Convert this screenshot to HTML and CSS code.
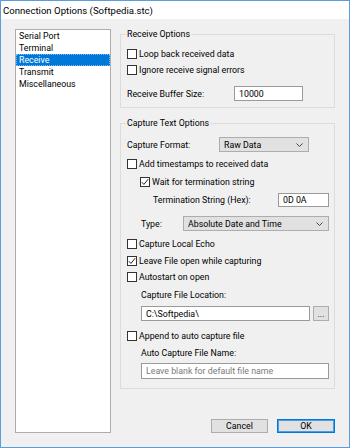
FILE: index.html
```html
<!DOCTYPE html>
<html lang="en">
<head>
    <meta charset="UTF-8">
    <meta name="viewport" content="width=device-width, initial-scale=1.0">
    <title>Connection Options</title>
    <link rel="stylesheet" href="styles.css">
</head>
<body>
    <div class="window">
        <div class="titlebar">Connection Options (Softpedia.stc)</div>
        <div class="body">
            <ul class="nav-list">
                <li>Serial Port</li>
                <li>Terminal</li>
                <li class="selected">Receive</li>
                <li>Transmit</li>
                <li>Miscellaneous</li>
            </ul>
            <div class="pane">
                <fieldset class="group group-receive">
                    <legend>Receive Options</legend>
                    <label class="row check"><span class="box"></span>Loop back received data</label>
                    <label class="row check"><span class="box"></span>Ignore receive signal errors</label>
                    <div class="row r-buffer">
                        <span class="label-buffer">Receive Buffer Size:</span>
                        <input class="field field-buffer" type="text" value="10000">
                    </div>
                </fieldset>

                <fieldset class="group group-capture">
                    <legend>Capture Text Options</legend>
                    <div class="row r-fmt">
                        <span class="label-fmt">Capture Format:</span>
                        <div class="select select-fmt"><span>Raw Data</span>
                            <svg width="7" height="4" viewBox="0 0 7 4"><path d="M0.5 0.5 L3.5 3.5 L6.5 0.5" fill="none" stroke="#444" stroke-width="1"/></svg>
                        </div>
                    </div>
                    <label class="row check r-stamp"><span class="box"></span>Add timestamps to received data</label>
                    <label class="row check r-wait"><span class="box">
                        <svg width="8" height="8" viewBox="0 0 8 8"><path d="M0.8 4.2 L2.9 6.4 L7.2 1.2" fill="none" stroke="#222" stroke-width="1"/></svg>
                    </span>Wait for termination string</label>
                    <div class="row r-term">
                        <span>Termination String (Hex):</span>
                        <input class="field field-term" type="text" value="0D 0A">
                    </div>
                    <div class="row r-type">
                        <span>Type:</span>
                        <div class="select select-type"><span>Absolute Date and Time</span>
                            <svg width="7" height="4" viewBox="0 0 7 4"><path d="M0.5 0.5 L3.5 3.5 L6.5 0.5" fill="none" stroke="#444" stroke-width="1"/></svg>
                        </div>
                    </div>
                    <label class="row check r-echo"><span class="box"></span>Capture Local Echo</label>
                    <label class="row check r-leave"><span class="box">
                        <svg width="8" height="8" viewBox="0 0 8 8"><path d="M0.8 4.2 L2.9 6.4 L7.2 1.2" fill="none" stroke="#222" stroke-width="1"/></svg>
                    </span>Leave File open while capturing</label>
                    <label class="row check"><span class="box"></span>Autostart on open</label>
                    <div class="row r-loclabel">Capture File Location:</div>
                    <div class="row r-loc">
                        <input class="field field-loc" type="text" value="C:\Softpedia\">
                        <button class="btn btn-browse">...</button>
                    </div>
                    <label class="row check r-append"><span class="box"></span>Append to auto capture file</label>
                    <div class="row r-namelabel">Auto Capture File Name:</div>
                    <div class="row r-name">
                        <input class="field field-name" type="text" placeholder="Leave blank for default file name">
                    </div>
                </fieldset>

                <div class="buttons">
                    <button class="btn btn-cancel">Cancel</button>
                    <button class="btn btn-ok">OK</button>
                </div>
            </div>
        </div>
    </div>
</body>
</html>
```

FILE: styles.css
```css
body {
    margin: 0;
    font-family: Roboto, "Liberation Sans", Arial, sans-serif;
    font-size: 8.8px;
    color: #000;
    background: #fff;
}

.window {
    width: 350px;
    height: 448px;
    box-sizing: border-box;
    border: 1px solid #5b9de0;
    display: flex;
    flex-direction: column;
    background: #f0f0f0;
}

.titlebar {
    height: 18px;
    background: #fff;
    padding-left: 2px;
    display: flex;
    align-items: center;
    font-size: 9.6px;
}

.body {
    flex: 1;
    display: flex;
    gap: 9px;
    padding: 9px 14px 14px;
}

.nav-list {
    list-style: none;
    margin: 1px 0 0;
    padding: 0;
    width: 96px;
    box-sizing: border-box;
    border: 1px solid #adadad;
    background: #fff;
}

.nav-list li {
    height: 12px;
    line-height: 12px;
    padding-left: 3px;
}

.nav-list li.selected {
    background: #0078d7;
    color: #fff;
    outline: 1px dotted #7fb8ea;
    outline-offset: -1px;
}

.pane {
    flex: 1;
    display: flex;
    flex-direction: column;
    min-width: 0;
}

.group {
    margin: 0;
    border: 1px solid #dcdcdc;
    padding: 6px 5px 6px 6px;
    min-width: 0;
}

.group legend {
    padding: 0 1px;
    margin-left: -1px;
    line-height: 12px;
}

.group-capture {
    margin-top: 9px;
    padding-top: 0;
    padding-bottom: 9px;
}

.row {
    display: flex;
    align-items: center;
    height: 16px;
}

.box {
    width: 10px;
    height: 10px;
    box-sizing: border-box;
    border: 1px solid #333;
    background: #fff;
    margin-right: 2px;
    display: inline-flex;
    align-items: center;
    justify-content: center;
}

.field {
    box-sizing: border-box;
    height: 100%;
    border: 1px solid #9a9a9a;
    background: #fff;
    font: inherit;
    padding: 0 4px;
    margin: 0;
    outline: none;
}

.field::placeholder {
    color: #7a7a7a;
}

.select {
    box-sizing: border-box;
    height: 100%;
    border: 1px solid #adadad;
    background: #e1e1e1;
    display: flex;
    align-items: center;
    justify-content: space-between;
    padding: 0 5px 0 4px;
}

.btn {
    box-sizing: border-box;
    margin: 0;
    padding: 0;
    border: 1px solid #adadad;
    background: #e1e1e1;
    font: inherit;
    color: #000;
}

/* receive group */
.r-buffer {
    margin-top: 8px;
    height: 15px;
}

.label-buffer {
    width: 107px;
}

.field-buffer {
    width: 69px;
}

/* capture group */
.r-fmt {
    margin-top: 8px;
    height: 15px;
}

.label-fmt {
    width: 92px;
}

.select-fmt {
    width: 90px;
}

.r-stamp {
    margin-top: 4px;
}

.r-wait {
    margin-top: 2px;
    padding-left: 13px;
}

.r-term {
    margin-top: 3px;
    height: 14px;
    padding-left: 26px;
}

.field-term {
    margin-left: auto;
    width: 51px;
}

.r-type {
    margin-top: 9px;
    height: 15px;
    padding-left: 14px;
}

.select-type {
    margin-left: auto;
    width: 146px;
}

.r-echo {
    margin-top: 5px;
}

.r-leave {
    margin-top: 1px;
}

.r-loclabel {
    margin-top: 3px;
    height: 14px;
    padding-left: 14px;
}

.r-loc {
    margin-top: 4px;
    height: 15px;
    padding-left: 14px;
    gap: 3px;
}

.field-loc {
    flex: 1;
    min-width: 0;
}

.btn-browse {
    width: 16px;
    height: 100%;
    line-height: 8px;
}

.r-append {
    margin-top: 7px;
}

.r-namelabel {
    margin-top: 2px;
    height: 14px;
    padding-left: 14px;
}

.r-name {
    margin-top: 3px;
    padding-left: 14px;
}

.field-name {
    flex: 1;
    min-width: 0;
}

/* dialog buttons */
.buttons {
    margin-top: auto;
    display: flex;
    justify-content: flex-end;
    gap: 9px;
}

.btn-cancel {
    width: 57px;
    height: 14px;
}

.btn-ok {
    width: 58px;
    height: 14px;
    border-color: #0078d7;
    box-shadow: inset 0 0 0 1px #4c9de3;
}
```
